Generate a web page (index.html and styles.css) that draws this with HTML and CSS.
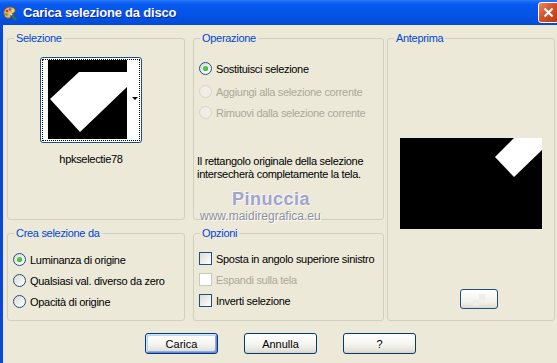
FILE: index.html
```html
<!DOCTYPE html>
<html lang="it">
<head>
    <meta charset="UTF-8">
    <title>Carica selezione da disco</title>
    <link rel="stylesheet" href="styles.css">
</head>
<body>
<div class="window">
    <div class="titlebar">
        <svg class="title-icon" width="16" height="16" viewBox="0 0 16 16">
            <path d="M2 9 C1 5 4 2 8 2 C12 2 14 4 13 7 C12 9 9 8 9 10 C9 12 8 14 5 13 C3 12.5 2.3 11 2 9 Z" fill="#E8B267" stroke="#8A4E1C" stroke-width="1"/>
            <circle cx="5" cy="6" r="1.3" fill="#E0302A"/>
            <circle cx="8" cy="4.5" r="1.2" fill="#2E6FE0"/>
            <circle cx="11" cy="5.5" r="1.2" fill="#F4E23A"/>
            <circle cx="4.5" cy="9.5" r="1.2" fill="#3BB03A"/>
            <path d="M9 9 L14 15" stroke="#3A7A2E" stroke-width="2"/>
            <path d="M8 8 L10 10" stroke="#D8D8D8" stroke-width="2"/>
        </svg>
        <span class="title">Carica selezione da disco</span>
        <span class="close">
            <svg width="13" height="13" viewBox="0 0 13 13"><path d="M2.5 2.5 L10.5 10.5 M10.5 2.5 L2.5 10.5" stroke="#fff" stroke-width="2.2"/></svg>
        </span>
    </div>

    <div class="client">
        <div class="panels">
            <div class="col col-left">
                <fieldset class="group group-sel">
                    <legend>Selezione</legend>
                    <div class="sel-body">
                        <div class="thumb">
                            <div class="thumb-focus">
                                <svg width="79" height="79" viewBox="0 0 79 79">
                                    <rect width="79" height="79" fill="#000"/>
                                    <polygon points="2,39 31,12 79,12 79,27 32,72" fill="#fff"/>
                                </svg>
                                <span class="thumb-strip"><span class="arrow"></span></span>
                            </div>
                        </div>
                        <div class="thumb-name">hpkselectie78</div>
                    </div>
                </fieldset>
                <fieldset class="group group-crea">
                    <legend>Crea selezione da</legend>
                    <div class="opts opts-crea">
                        <div class="row"><span class="radio on"></span><span>Luminanza di origine</span></div>
                        <div class="row"><span class="radio"></span><span>Qualsiasi val. diverso da zero</span></div>
                        <div class="row"><span class="radio"></span><span>Opacità di origine</span></div>
                    </div>
                </fieldset>
            </div>

            <div class="col col-mid">
                <fieldset class="group group-op">
                    <legend>Operazione</legend>
                    <div class="opts opts-op">
                        <div class="row"><span class="radio on"></span><span>Sostituisci selezione</span></div>
                        <div class="row r2 disabled"><span class="radio dis"></span><span>Aggiungi alla selezione corrente</span></div>
                        <div class="row r3 disabled"><span class="radio dis"></span><span>Rimuovi dalla selezione corrente</span></div>
                        <p class="note">Il rettangolo originale della selezione<br>intersecherà completamente la tela.</p>
                    </div>
                </fieldset>
                <fieldset class="group group-opz">
                    <legend>Opzioni</legend>
                    <div class="opts opts-opz">
                        <div class="row"><span class="check"></span><span>Sposta in angolo superiore sinistro</span></div>
                        <div class="row disabled"><span class="check dis"></span><span>Espandi sulla tela</span></div>
                        <div class="row"><span class="check"></span><span>Inverti selezione</span></div>
                    </div>
                </fieldset>
            </div>

            <fieldset class="group group-prev">
                <legend>Anteprima</legend>
                <svg class="preview" width="142" height="91" viewBox="0 0 142 91">
                    <rect width="142" height="91" fill="#000"/>
                    <polygon points="95,19 114,0 142,0 142,12 114,39" fill="#fff"/>
                </svg>
                <span class="zoom-btn"></span>
            </fieldset>
        </div>

        <div class="buttons">
            <button class="btn default">Carica</button>
            <button class="btn">Annulla</button>
            <button class="btn">?</button>
        </div>
    </div>

    <div class="wm-name">Pinuccia</div>
    <div class="wm-site">www.maidiregrafica.eu</div>
</div>
</body>
</html>
```

FILE: styles.css
```css
* { box-sizing: border-box; }
body { margin: 0; background: #ECE9D8; font: 11px "Liberation Sans", Arial, sans-serif; letter-spacing: -0.3px; color: #000; }
.window { width: 557px; height: 363px; overflow: hidden; position: relative; }

.titlebar { height: 25px; display: flex; align-items: center; padding-left: 2px;
    background: linear-gradient(#2C7CF8 0, #1466F5 2px, #0658EE 5px, #0454E6 60%, #0349D6 100%); }
.title-icon { margin-right: 5px; flex: none; }
.title { color: #fff; font: bold 13px "Liberation Sans", Arial, sans-serif; letter-spacing: -0.2px; text-shadow: 1px 1px #0A2A9C; }
.close { margin-left: auto; margin-right: -2px; width: 21px; height: 21px; display: flex; align-items: center; justify-content: center;
    border: 1px solid #fff; border-radius: 3px; background: linear-gradient(135deg, #E88A66, #D2532A 45%, #B8380F); }

.client { height: 338px; border-left: 3px solid #0B46DA; padding: 7px 0 0 4px; }
.panels { display: flex; }
.col { display: flex; flex-direction: column; }
.col-left { width: 178px; }
.col-mid { width: 191px; margin-left: 8px; }

.group { margin: 0; padding: 0; min-width: 0; border: 1px solid #D0D0BF; border-radius: 3px; }
.group legend { margin-left: 6px; padding: 0 2px; line-height: 13px; color: #0046D5; }
.group-sel, .group-op { height: 188px; }
.group-crea, .group-opz { height: 94px; margin-top: 7px; }
.group-prev { width: 168px; height: 289px; margin-left: 3px; }

.sel-body { display: flex; flex-direction: column; align-items: center; padding: 12px 10px 0 0; }
.thumb { width: 102px; height: 86px; border: 1px solid #1C5180; border-radius: 3px; background: #fff; padding: 1px 0 0 1px; }
.thumb-focus { width: 98px; height: 82px; border: 1px dotted #000; padding-left: 5px; display: flex; }
.thumb-strip { flex: 1; position: relative; }
.arrow { position: absolute; right: 1px; top: 37px; border-left: 3px solid transparent; border-right: 3px solid transparent; border-top: 3px solid #000; }
.thumb-name { margin-top: 9px; line-height: 14px; }

.opts { padding-left: 5px; }
.row { display: flex; align-items: center; gap: 4px; height: 13px; white-space: nowrap; }
.opts-crea { padding-top: 13px; }
.opts-crea .row + .row { margin-top: 8px; }
.opts-opz { padding-top: 12px; }
.opts-opz .row + .row { margin-top: 8px; }
.opts-op { padding-top: 17px; }
.opts-op .r2 { margin-top: 10px; }
.opts-op .r3 { margin-top: 8px; }
.disabled { color: #ACA899; }
.note { margin: 36px 0 0 -2px; line-height: 13px; }

.radio { width: 13px; height: 13px; flex: none; border: 1px solid #1C5180; border-radius: 50%; position: relative;
    background: linear-gradient(135deg, #DCDBD3, #FFFFFF); }
.radio.on::after { content: ""; position: absolute; left: 3px; top: 3px; width: 5px; height: 5px; border-radius: 50%;
    background: radial-gradient(circle at 40% 40%, #5CD85A, #1E9E1E); }
.radio.dis { border-color: #D7D4C7; background: #F0EEE4; }
.check { width: 13px; height: 13px; flex: none; border: 1px solid #1C5180; background: linear-gradient(135deg, #DCDBD3, #FFFFFF); }
.check.dis { border-color: #CAC8BB; background: #FFFFFF; }

.preview { display: block; margin: 93px 0 0 12px; }
.zoom-btn { display: block; width: 38px; height: 20px; margin: 60px 0 0 72px; border: 1px solid #1C5180; border-radius: 3px;
    background:
        conic-gradient(#EDEDED 25%, transparent 0 50%, #EDEDED 0 75%, transparent 0) 12px 4px / 12px 12px no-repeat,
        linear-gradient(#FFFFFF, #F1F0EA 70%, #DDD9CE); }

.buttons { display: flex; gap: 26px; margin: 12px 0 0 138px; }
.btn { width: 73px; height: 21px; padding: 0; border: 1px solid #003C74; border-radius: 3px; font: 11px "Liberation Sans", Arial, sans-serif; color: #000;
    background: linear-gradient(#FFFFFF, #F4F4F0 55%, #E3E0D6 90%, #D6D0C5); }
.btn.default { box-shadow: inset 1px 1px 0 #CEE7FF, inset -1px -1px 0 #6982EE, inset 2px 2px 0 #BCD4F6, inset -2px -2px 0 #89ADE4; }

.wm-name { position: absolute; left: 232px; top: 190px; font: bold 18px "Liberation Sans", Arial, sans-serif; line-height: 19px; letter-spacing: 0.5px; color: #A2A4C8;
    text-shadow: 1px 1px 0 #F4F4FA, -1px -1px 0 #F4F4FA; }
.wm-site { position: absolute; left: 200px; top: 210px; font: 12px "Liberation Sans", Arial, sans-serif; line-height: 13px; letter-spacing: 0; color: #8F90A4; text-shadow: 1px 1px 0 #FFFFFF; }
```
